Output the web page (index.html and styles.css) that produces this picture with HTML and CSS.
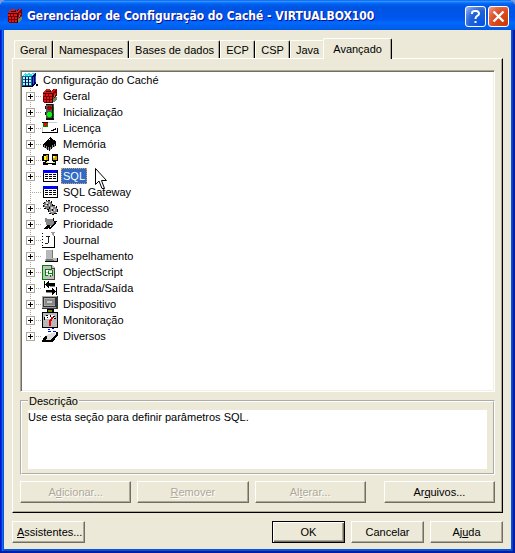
FILE: index.html
```html
<!DOCTYPE html>
<html lang="pt-BR">
<head>
<meta charset="utf-8">
<title>Gerenciador de Configuração do Caché - VIRTUALBOX100</title>
<link rel="stylesheet" href="styles.css">
</head>
<body>
<svg class="defs" aria-hidden="true">
  <symbol id="cube" viewBox="0 0 16 16">
    <path fill="#700" d="M1 4L5 1H8L9 3L11 1H15V5L14 12L10 15H2L1 12Z"/>
    <path fill="#e01818" d="M1 4L5 1H8V3H10L12 1H14L11 5H1ZM1 6H3V8H1ZM4 6H6V8H4ZM7 6H10V8H7ZM2 9H4V11H2ZM5 9H7V11H5ZM8 9H10V11H8ZM2 12H4V14H2ZM5 12H7V14H5ZM8 12H10V14H8ZM12 5H14V7H12ZM11 9H12V11H11Z"/>
    <path fill="#300" d="M1 5H11V6H1ZM4 3H9V4H4ZM10 6H11V15H10Z"/>
    <path fill="#686" d="M13 9H15V11L12 14H11V12ZM12 7H13V9H12Z"/>
  </symbol>
</svg>
<main class="window">
  <header class="titlebar">
    <svg class="icon"><use href="#cube"/></svg>
    <h1>Gerenciador de Configuração do Caché - VIRTUALBOX100</h1>
    <button class="caption help" aria-label="Ajuda da janela">
      <svg viewBox="0 0 19 19"><path d="M6 7V6Q6 4 9 4H10Q13 4 13 7Q13 8 11 9Q9.500 10 9.500 12M9.500 14V16" fill="none" stroke="#fff" stroke-width="2"/></svg>
    </button>
    <button class="caption close" aria-label="Fechar">
      <svg viewBox="0 0 19 19"><path d="M4.500 4.500L14.500 14.500M14.500 4.500L4.500 14.500" fill="none" stroke="#fff" stroke-width="2.400"/></svg>
    </button>
  </header>
  <div class="client">
    <div class="tabs" role="tablist">
      <button role="tab">Geral</button>
      <button role="tab">Namespaces</button>
      <button role="tab">Bases de dados</button>
      <button role="tab">ECP</button>
      <button role="tab">CSP</button>
      <button role="tab">Java</button>
      <button role="tab" class="active" aria-selected="true">Avançado</button>
    </div>
    <section class="page" role="tabpanel">
      <div class="tree">
        <div class="root">
          <svg class="icon" viewBox="0 0 16 16"><path fill="#0a6a90" d="M0 4L4 1H14V12L10 15H0Z"/><path fill="#20e0e8" d="M4 1H14L11 4H0Z"/><path fill="#fff" d="M4 1H6V2H4ZM8 1H10V2H8ZM2 3H3V4H2ZM6 3H7V4H6ZM10 2H11V3H10Z"/><path fill="#b8f0f8" d="M1 5H3V7H1ZM4 5H6V7H4ZM7 5H9V7H7ZM1 8H3V10H1ZM4 8H6V10H4ZM7 8H9V10H7ZM1 11H3V13H1ZM4 11H6V13H4ZM7 11H9V13H7Z"/><path fill="#000060" d="M10 4L14 1V12L10 15ZM3 5H4V15H3ZM6 5H7V15H6Z"/><path fill="#2060c0" d="M11 5H12V12H11ZM13 4H14V10H13Z"/><path fill="#000" d="M14 12H16V14H14ZM0 14H10V15H0Z"/></svg>
          <span>Configuração do Caché</span>
        </div>
        <ul>
          <li><button class="toggle" aria-label="Expandir Geral"></button><svg class="icon"><use href="#cube"/></svg><span>Geral</span></li>
          <li><button class="toggle" aria-label="Expandir Inicialização"></button><svg class="icon" viewBox="0 0 16 16"><path fill="#555" d="M4 0H12V15H4Z"/><path fill="#111" d="M4 0H11V1H4ZM10 1H11V15H10ZM4 14H12V16H4ZM3 2H4V5H3ZM3 8H4V11H3Z"/><path fill="#a00" d="M6 2H9V3H10V5H9V6H6V5H5V3H6Z"/><path fill="#0f0" d="M6 8H9V9H10V12H9V13H6V12H5V9H6Z"/><path fill="#060" d="M11 3H12V7H11ZM11 9H12V13H11Z"/></svg><span>Inicialização</span></li>
          <li><button class="toggle" aria-label="Expandir Licença"></button><svg class="icon" viewBox="0 0 16 16"><path fill="#fff" d="M0 2H15V13H0Z"/><path fill="#ccc" d="M6 2H15V3H6ZM0 7H1V12H0Z"/><path fill="#000" d="M0 12H16V13H0ZM15 8H16V13H15ZM0 2H6V3H0ZM9 10H11V11H9ZM12 9H13V10H12ZM13 8H14V10H13ZM11 9H12V11H11Z"/><path fill="#080" d="M1 3H6V7H1Z"/><path fill="#f00" d="M2 3H5V6H2Z"/></svg><span>Licença</span></li>
          <li><button class="toggle" aria-label="Expandir Memória"></button><svg class="icon" viewBox="0 0 16 16"><path fill="#000" d="M1 8L8 1L15 6L7 12Z"/><path fill="#000" d="M1 8H2V11H1ZM3 9H4V12H3ZM5 11H6V14H5ZM7 11H8V15H7ZM9 9H10V13H9ZM11 8H12V11H11ZM13 7H14V10H13Z"/><path fill="#888" d="M2 9H3V12H2ZM4 10H5V13H4ZM6 11H7V14H6ZM8 11H9V14H8ZM10 9H11V12H10ZM12 8H13V11H12Z"/><path fill="#fff" d="M7 3H8V4H7Z"/></svg><span>Memória</span></li>
          <li><button class="toggle" aria-label="Expandir Rede"></button><svg class="icon" viewBox="0 0 16 16"><path fill="#000" d="M1 2H7V9H5V11H11V9H10V2H16V9H14V13H10V12H6V13H1V10H3V9H0V4H1Z"/><path fill="#ff0" d="M2 4H4V8H2ZM11 4H14V6H11ZM4 10H6V11H4ZM11 10H13V11H11Z"/><path fill="#c8a000" d="M4 3H6V8H4ZM13 4H15V8H13ZM11 6H13V8H11Z"/><path fill="#fff" d="M2 4H3V5H2ZM11 4H12V5H11ZM7 9H9V10H7Z"/></svg><span>Rede</span></li>
          <li><button class="toggle" aria-label="Expandir SQL"></button><svg class="icon" viewBox="0 0 16 16"><use href="#sqltable"/></svg><span class="selected">SQL</span></li>
          <li><svg class="icon" viewBox="0 0 16 16"><g id="sqltable"><path fill="#000" d="M1 2H16V14H1Z"/><path fill="#fff" d="M2 5H15V13H2Z"/><path fill="#00f" d="M1 2H15V5H1Z"/><path fill="#000" d="M3 6H6V7H3ZM7 6H10V7H7ZM11 6H14V7H11ZM3 8H6V9H3ZM7 8H10V9H7ZM11 8H14V9H11ZM3 10H6V11H3ZM7 10H10V11H7ZM11 10H14V11H11Z"/></g></svg><span>SQL Gateway</span></li>
          <li><button class="toggle" aria-label="Expandir Processo"></button><svg class="icon" viewBox="0 0 16 16"><g fill="none" stroke="#000" stroke-dasharray="2 1"><circle cx="6" cy="5" r="4.500"/><circle cx="11" cy="10" r="4.500"/></g><circle cx="6" cy="5" r="4" fill="#777"/><circle cx="11" cy="10" r="4" fill="#888"/><path fill="#ddd" d="M4 2H6V4H4ZM7 4H8V6H7ZM3 5H5V6H3ZM9 7H11V9H9ZM12 9H13V11H12ZM9 11H11V12H9Z"/><path fill="#000" d="M5 4H6V5H5ZM10 9H11V11H10ZM7 7H8V9H7ZM12 13H14V14H12Z"/></svg><span>Processo</span></li>
          <li><button class="toggle" aria-label="Expandir Prioridade"></button><svg class="icon" viewBox="0 0 16 16"><path fill="#888" d="M3 2L6 3H9L12 2V6H14L10 11L7 9L4 9Z"/><path fill="#000" d="M11 2H12V5H11ZM12 5H15V6H14V8H13V9H12V10H11V11H10V12H9V13H7V11H9V10H10V9H11V8H12ZM2 13L5 9H8V11L5 13Z"/></svg><span>Prioridade</span></li>
          <li><button class="toggle" aria-label="Expandir Journal"></button><svg class="icon" viewBox="0 0 16 16"><path fill="#000" d="M0 1H1V2H0ZM0 4H1V5H0ZM0 7H1V8H0ZM0 10H1V11H0ZM0 13H1V14H0ZM0 15H13V16H0ZM12 4H13V16H12Z"/><path fill="#222" d="M4 4H8V5H7V11H6V12H3V11H6V5H4Z"/><path fill="#999" d="M9 0H13V1H12V4H11V3H10V1H9Z"/></svg><span>Journal</span></li>
          <li><button class="toggle" aria-label="Expandir Espelhamento"></button><svg class="icon" viewBox="0 0 16 16"><path fill="#b8b8b8" d="M4 2H10V10H15V13H3V11H4Z"/><path fill="#777" d="M10 2H11V10H10ZM4 11H10V10L12 13H4Z"/><path fill="#000" d="M3 13H16V14H3ZM15 10H16V13H15Z"/></svg><span>Espelhamento</span></li>
          <li><button class="toggle" aria-label="Expandir ObjectScript"></button><svg class="icon" viewBox="0 0 16 16"><path fill="#c0c0c0" d="M0 1H10L13 4V16H0Z"/><path fill="#008000" d="M0 1H9V2H1V15H6V16H0ZM3 5H10V6H4V12H3ZM6 7H7V10H6ZM7 9H10V10H7ZM10 6H11V12H10ZM4 11H6V12H4ZM8 11H9V13H8Z"/><path fill="#fff" d="M4 6H6V8H4ZM4 9H6V11H4ZM7 7H10V9H7ZM7 10H10V11H7Z"/><path fill="#444" d="M9 1H10V4H13V16H6V15H12V5H9Z"/></svg><span>ObjectScript</span></li>
          <li><button class="toggle" aria-label="Expandir Entrada/Saída"></button><svg class="icon" viewBox="0 0 16 16"><path fill="#000" d="M2 1H3V8H2ZM3 4L7 1V3H13V6H7V8L3 5ZM14 7H15V15H14ZM14 11L10 8V10H4V12H10V15L14 12Z"/><path fill="#888" d="M8 6H13V7H8ZM4 12H10V13H4Z"/></svg><span>Entrada/Saída</span></li>
          <li><button class="toggle" aria-label="Expandir Dispositivo"></button><svg class="icon" viewBox="0 0 16 16"><path fill="#333" d="M0 0H16V13H0Z"/><path fill="#aaa" d="M0 0H15V1H1V12H0ZM2 2H13V10H2Z"/><path fill="#888" d="M3 3H13V9H3Z"/><path fill="#ccc" d="M5 5H10V7H5Z"/><path fill="#999" d="M1 11H14V12H1Z"/><path fill="#000" d="M5 13H12V16H5Z"/><path fill="#880" d="M6 14H10V16H6Z"/></svg><span>Dispositivo</span></li>
          <li><button class="toggle" aria-label="Expandir Monitoração"></button><svg class="icon" viewBox="0 0 16 16"><path fill="#000" d="M0 0H16V16H0Z"/><path fill="#b8b8b8" d="M1 1H15V15H1Z"/><path fill="#fff" d="M3 4L5 3H11L13 4V7H3Z"/><path fill="#000" d="M2 5H3V8H2ZM4 3H6V4H4ZM5 5H6V6H5ZM8 3H9V5H8ZM11 4H13V5H11ZM12 6H14V7H12Z"/><path fill="none" stroke="#e00" stroke-width="2" d="M11 5L8 9V14"/></svg><span>Monitoração</span></li>
          <li><button class="toggle" aria-label="Expandir Diversos"></button><svg class="icon" viewBox="0 0 16 16"><path fill="#ddd" d="M4 7L11 5L15 6L10 13H1L3 9Z"/><path fill="#000" d="M0 13L3 8H5V10L3 12H9L14 6V4H16V7L11 14H0Z"/><path fill="#00f" d="M6 1H8V2H6ZM10 0H12V1H10ZM6 3H9V4H6ZM11 3H14V4H11Z"/></svg><span>Diversos</span></li>
        </ul>
        <svg class="cursor" viewBox="0 0 13 22" aria-hidden="true"><path fill="#fff" stroke="#000" d="M.5 .5V16.500L4 13L7 20.500H9.500L6.500 12.500H11.500Z"/></svg>
      </div>
      <fieldset>
        <legend><label for="description">Descrição</label></legend>
        <textarea id="description" readonly>Use esta seção para definir parâmetros SQL.</textarea>
      </fieldset>
      <div class="actions">
        <button class="push" disabled>A<u>d</u>icionar...</button>
        <button class="push" disabled><u>R</u>emover</button>
        <button class="push" disabled>Al<u>t</u>erar...</button>
        <button class="push files">Ar<u>q</u>uivos...</button>
      </div>
    </section>
    <footer>
      <button class="push wizards"><u>A</u>ssistentes...</button>
      <button class="push default">OK</button>
      <button class="push">Cancelar</button>
      <button class="push">Aj<u>u</u>da</button>
    </footer>
  </div>
</main>
</body>
</html>
```
FILE: styles.css
```css
* {
  box-sizing: border-box;
}

body {
  margin: 0;
  background: #7a9be0;
  color: #000;
  font: 11px/16px "Liberation Sans", Arial, sans-serif;
}

button,
textarea {
  margin: 0;
  color: inherit;
  font: inherit;
}

.defs {
  position: absolute;
  width: 0;
  height: 0;
}

.icon {
  flex: none;
  width: 16px;
  height: 16px;
  shape-rendering: crispEdges;
}

.window {
  display: flex;
  flex-direction: column;
  min-height: 100vh;
  border-radius: 7px 7px 0 0;
  background: linear-gradient(90deg, #0019cf 0 1px, #0831d9 1px 2px, #166aee 2px 3px, #0855dd 3px calc(100% - 3px), #0441d8 calc(100% - 3px) calc(100% - 2px), #001ea0 calc(100% - 2px));
  box-shadow: inset 0 -2px #001ea0;
  overflow: hidden;
}

.titlebar {
  display: flex;
  flex: none;
  align-items: center;
  gap: 2px;
  height: 30px;
  padding: 2px 6px 0 7px;
  background: linear-gradient(#0058ee 0, #3593ff 4%, #288eff 6%, #127dff 8%, #036ffc 10%, #0262ee 14%, #0057e5 20%, #0054e3 24%, #0055eb 56%, #005bf5 66%, #026afe 76%, #0062ef 86%, #0060f0 92%, #0058e0 100%);
}

.titlebar h1 {
  flex: 1;
  margin: 0;
  padding-left: 2px;
  color: #fff;
  font: bold 12px/20px "DejaVu Sans Condensed", "Trebuchet MS", sans-serif;
  text-shadow: 1px 1px #0f1089;
  white-space: nowrap;
}

.caption {
  flex: none;
  width: 21px;
  height: 21px;
  padding: 0;
  border: 1px solid #fff;
  border-radius: 3px;
}

.caption svg {
  display: block;
  width: 19px;
  height: 19px;
}

.help {
  background: radial-gradient(circle at 90% 90%, #0054e9 0, #2263d5 55%, #4479e4 70%, #a3bbec 100%);
}

.close {
  background: radial-gradient(circle at 90% 90%, #cc3a08 0, #dd4a20 55%, #e2694a 75%, #f0a58c 100%);
}

.client {
  display: flex;
  flex: 1;
  flex-direction: column;
  margin: 0 4px 4px;
  padding: 8px 8px 6px;
  background: #ece9d8;
}

.tabs {
  display: flex;
  align-items: flex-end;
  height: 20px;
  padding-left: 2px;
}

.tabs button {
  min-width: 35px;
  height: 18px;
  padding: 0 5px;
  border: 1px solid #fff;
  border-right-color: #000;
  border-bottom: 0;
  border-radius: 2px 2px 0 0;
  background: #ece9d8;
  box-shadow: inset -1px 0 #aca899;
  white-space: nowrap;
}

.tabs .active {
  z-index: 1;
  height: 21px;
  margin: 0 0 -1px -2px;
  padding: 0 9px;
}

.page {
  display: flex;
  flex: 1;
  flex-direction: column;
  padding: 11px 7px 9px;
  border: 1px solid;
  border-color: #fff #000 #000 #fff;
  box-shadow: inset -1px -1px #aca899;
}

.tree {
  position: relative;
  flex: 1;
  padding: 1px;
  border: 1px solid;
  border-color: #aca899 #fff #fff #aca899;
  background: #fff;
  box-shadow: inset 1px 1px #716f64, inset -1px -1px #f1efe2;
}

.root,
.tree li {
  display: flex;
  align-items: center;
  height: 16px;
}

.root {
  gap: 3px;
}

.root span,
.tree li span {
  padding: 0 2px;
}

.tree ul {
  margin: 0;
  padding: 0 0 0 8px;
  list-style: none;
}

.tree li {
  padding-left: 12px;
  background:
    repeating-linear-gradient(#aca899 0 1px, transparent 1px 2px) 0 0 / 1px 100% no-repeat,
    repeating-linear-gradient(90deg, #aca899 0 1px, transparent 1px 2px) 0 8px / 12px 1px no-repeat;
}

.tree li:last-child {
  background-size: 1px 8px, 12px 1px;
}

.tree li .icon {
  margin-right: 3px;
}

.toggle {
  flex: none;
  width: 9px;
  height: 9px;
  margin: 0 7px 0 -16px;
  padding: 0;
  border: 1px solid #aca899;
  background:
    linear-gradient(#000, #000) center / 5px 1px no-repeat,
    linear-gradient(#000, #000) center / 1px 5px no-repeat,
    #fff;
}

.tree li .selected {
  outline: 1px dotted #e0a050;
  outline-offset: -1px;
  background: #316ac5;
  color: #fff;
}

.cursor {
  position: absolute;
  top: 97px;
  left: 74px;
  width: 13px;
  height: 22px;
}

fieldset {
  min-width: 0;
  margin: 1px 0 6px;
  padding: 1px 6px 4px;
  border: 2px groove #fffffc;
}

legend {
  padding: 0 1px;
}

textarea {
  display: block;
  width: 100%;
  height: 59px;
  padding: 0;
  border: 0;
  outline: 0;
  background: #fff;
  line-height: 14px;
  resize: none;
}

.actions {
  display: flex;
  gap: 6px;
}

.actions .push {
  flex: 1;
}

.actions .files {
  margin-left: 12px;
}

.push {
  height: 22px;
  padding: 0 4px;
  border: 1px solid;
  border-color: #fff #716f64 #716f64 #fff;
  background: #ece9d8;
  box-shadow: inset -1px -1px #aca899;
}

.push:disabled {
  color: #aca899;
  text-shadow: 1px 1px #fff;
}

footer {
  display: flex;
  gap: 6px;
  padding-top: 8px;
}

footer .push {
  width: 73px;
}

footer .wizards {
  margin-right: auto;
}

footer .default {
  border-color: #000;
  box-shadow: inset 1px 1px #fff, inset -1px -1px #716f64, inset -2px -2px #aca899;
}
```
